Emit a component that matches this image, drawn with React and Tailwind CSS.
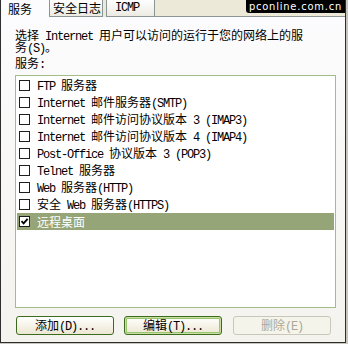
import React from "react"

// split text into ascii / cjk runs so latin gets the 6px-wide mono look
function T({ s }) {
  const parts = s.split(/([\x00-\x7f]+)/).filter(Boolean)
  return (
    <span className="flex items-baseline whitespace-pre leading-[12px]">
      {parts.map((p, i) =>
        /^[\x00-\x7f]+$/.test(p) ? (
          <span key={i} className="font-['Liberation_Mono',monospace] tracking-[-1.2px]">
            {p}
          </span>
        ) : (
          <span key={i}>{p}</span>
        ),
      )}
    </span>
  )
}

const services = [
  { name: "FTP 服务器", checked: false },
  { name: "Internet 邮件服务器(SMTP)", checked: false },
  { name: "Internet 邮件访问协议版本 3 (IMAP3)", checked: false },
  { name: "Internet 邮件访问协议版本 4 (IMAP4)", checked: false },
  { name: "Post-Office 协议版本 3 (POP3)", checked: false },
  { name: "Telnet 服务器", checked: false },
  { name: "Web 服务器(HTTP)", checked: false },
  { name: "安全 Web 服务器(HTTPS)", checked: false },
  { name: "远程桌面", checked: true, selected: true },
]

function Checkbox({ checked }) {
  return (
    <span className="flex h-[11px] w-[11px] shrink-0 items-center justify-center border border-[#1e1e1e] bg-white">
      {checked && (
        <svg width="9" height="9" viewBox="0 0 9 9">
          <path d="M1.5 4.2 L3.6 6.4 L7.6 1.8" fill="none" stroke="#000" strokeWidth="1.8" />
        </svg>
      )}
    </span>
  )
}

function Button({ label, isDefault, disabled, className = "" }) {
  return (
    <button
      className={
        "flex h-[19px] w-[99px] items-center justify-center rounded-[3px] border text-[12px] " +
        (disabled
          ? "border-[#c9c7ba] bg-[#f5f4ea] text-[#aca899] "
          : "border-[#3d6b1e] bg-gradient-to-b from-white to-[#ece7d2] text-black ") +
        (isDefault ? "shadow-[inset_0_0_0_1px_#c6e0a4,inset_0_0_0_2px_#9cc46e] " : "") +
        className
      }
    >
      <T s={label} />
    </button>
  )
}

export default function App() {
  return (
    <div className="h-[344px] w-[348px] overflow-hidden bg-[#c8c6bc] font-['Noto_Sans_CJK_SC',sans-serif] text-[12px] text-black">
      <div className="relative flex h-[343px] w-[346px] flex-col border-x border-b border-[#2e2e2e] bg-gradient-to-b from-[#fcfcfe] to-[#f4f3ee]">
        {/* tab strip */}
        <div className="flex h-[17px] shrink-0 items-stretch whitespace-nowrap bg-[#ece9d8] leading-[12px]">
          <div className="flex w-[48px] items-center bg-[#fcfcfe] pl-[7px]">服务</div>
          <div className="flex w-[54px] items-center border-x border-b border-[#8b9596] bg-gradient-to-b from-[#fefefe] to-[#ecebe2] pl-[3px]">
            安全日志
          </div>
          <div className="ml-[3px] flex w-[49px] items-center border-x border-b border-[#8b9596] bg-gradient-to-b from-[#fefefe] to-[#ecebe2] pl-[8px]">
            <T s="ICMP" />
          </div>
          <div className="flex-1 border-b border-[#8b9596]" />
        </div>

        <div className="absolute right-[0px] top-0 flex h-[13px] items-center rounded-bl-[3px] bg-black px-[3px] font-['DejaVu_Sans_Condensed','DejaVu_Sans',sans-serif] text-[11px] leading-[11px] tracking-[0.8px] text-white">
          pconline.com.cn
        </div>

        {/* body */}
        <div className="flex flex-1 flex-col px-[14px] pt-[13px]">
          <div className="flex h-[12px] items-center">
            <T s="选择 Internet 用户可以访问的运行于您的网络上的服" />
          </div>
          <div className="flex h-[12px] items-center">
            <T s="务(S)。" />
          </div>
          <div className="mt-[4px] flex h-[12px] items-center">
            <T s="服务:" />
          </div>
          <div className="mt-[5px] h-[233px] w-[321px] shrink-0 border border-[#a4bd86] bg-white p-[1px]">
            {services.map((s) => (
              <div
                key={s.name}
                className={
                  "flex h-[17px] items-center gap-[7px] pl-[2px] " + (s.selected ? "bg-[#95a577] text-white" : "")
                }
              >
                <Checkbox checked={s.checked} />
                <T s={s.name} />
              </div>
            ))}
          </div>
          <div className="mt-[8px] flex">
            <Button label="添加(D)..." className="ml-[1px]" />
            <Button label="编辑(T)..." isDefault className="ml-[10px]" />
            <Button label="删除(E)" disabled className="ml-[11px]" />
          </div>
        </div>
      </div>
    </div>
  )
}
